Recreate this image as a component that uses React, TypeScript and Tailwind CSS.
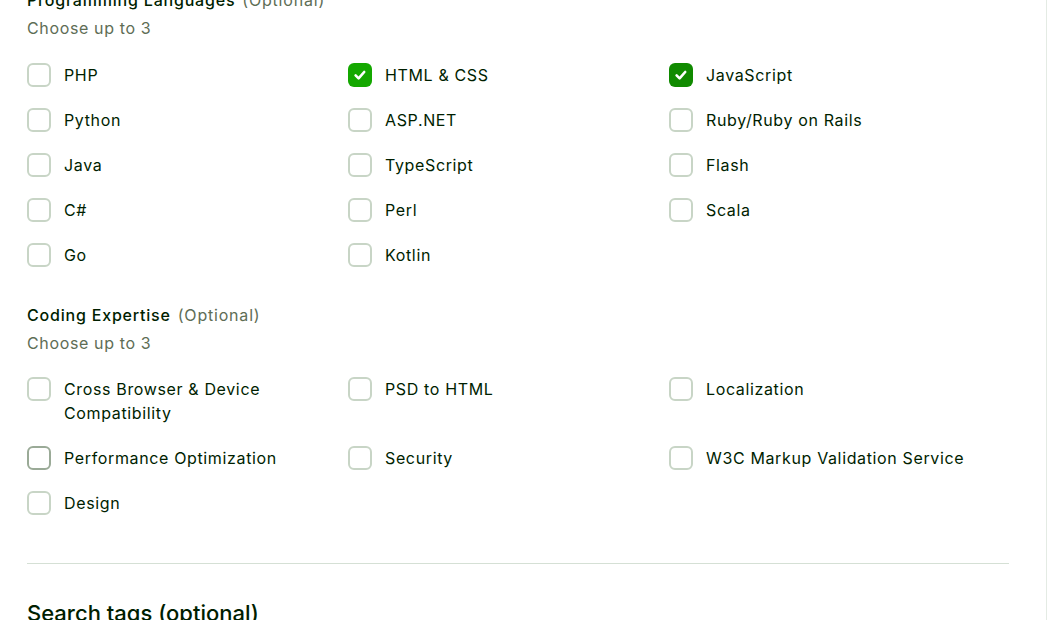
import React from 'react';

type Option = { label: string; checked?: boolean; tone?: 'light' | 'dark'; hover?: boolean };

const LANGUAGES: Option[] = [
  { label: 'PHP' },
  { label: 'HTML & CSS', checked: true, tone: 'light' },
  { label: 'JavaScript', checked: true, tone: 'dark' },
  { label: 'Python' },
  { label: 'ASP.NET' },
  { label: 'Ruby/Ruby on Rails' },
  { label: 'Java' },
  { label: 'TypeScript' },
  { label: 'Flash' },
  { label: 'C#' },
  { label: 'Perl' },
  { label: 'Scala' },
  { label: 'Go' },
  { label: 'Kotlin' },
];

const EXPERTISE: Option[] = [
  { label: 'Cross Browser & Device Compatibility' },
  { label: 'PSD to HTML' },
  { label: 'Localization' },
  { label: 'Performance Optimization', hover: true },
  { label: 'Security' },
  { label: 'W3C Markup Validation Service' },
  { label: 'Design' },
];

const Checkbox: React.FC<{ opt: Option }> = ({ opt }) => {
  if (opt.checked) {
    return (
      <span
        className={`flex h-6 w-6 shrink-0 items-center justify-center rounded-[6px] ${
          opt.tone === 'dark' ? 'bg-[#108a00]' : 'bg-[#14a800]'
        }`}
      >
        <svg width="16" height="16" viewBox="0 0 16 16" fill="none">
          <path d="M3.6 8.4l3 3 5.6-6.4" stroke="white" strokeWidth="2.6" strokeLinecap="round" strokeLinejoin="round" />
        </svg>
      </span>
    );
  }
  return (
    <span
      className={`h-6 w-6 shrink-0 rounded-[6px] border-2 bg-white ${
        opt.hover ? 'border-[#9aaa97]' : 'border-[#c8d5c6]'
      }`}
    />
  );
};

const OptionGrid: React.FC<{ items: Option[] }> = ({ items }) => (
  <div className="grid grid-cols-[321px_321px_321px] gap-y-[21px]">
    {items.map((opt) => (
      <label key={opt.label} className="flex items-start gap-[13px] pr-6">
        <Checkbox opt={opt} />
        <span className="text-[16px] leading-6 tracking-[0.04em] text-[#001e00]">{opt.label}</span>
      </label>
    ))}
  </div>
);

const Section: React.FC<{ title: string; items: Option[]; gridGap?: string }> = ({ title, items, gridGap }) => (
  <div>
    <div className="text-[16px] leading-6 tracking-[0.05em]">
      <span className="font-medium text-[#001e00]">{title}</span>
      <span className="ml-[7px] text-[#5e6d55]">(Optional)</span>
    </div>
    <p className="mt-1 text-[16px] leading-6 tracking-[0.04em] text-[#5e6d55]">Choose up to 3</p>
    <div className={gridGap ?? 'mt-[23px]'}>
      <OptionGrid items={items} />
    </div>
  </div>
);

export default function App() {
  return (
    <div
      className="h-[620px] w-[1047px] overflow-hidden border-r border-[#e4ebe4] bg-white"
      style={{ fontFamily: 'Inter, "Liberation Sans", Arial, sans-serif' }}
    >
      <div className="-mt-[12px] pl-[27px] pr-[37px]">
        <Section title="Programming Languages" items={LANGUAGES} />
        <div className="mt-[36px]">
          <Section title="Coding Expertise" items={EXPERTISE} gridGap="mt-[22px]" />
        </div>
        <div className="mt-[48px] h-px bg-[#d5e0d5]" />
        <h2 className="mt-[35px] text-[22px] font-medium leading-7 text-[#001e00]">Search tags (optional)</h2>
      </div>
    </div>
  );
}
